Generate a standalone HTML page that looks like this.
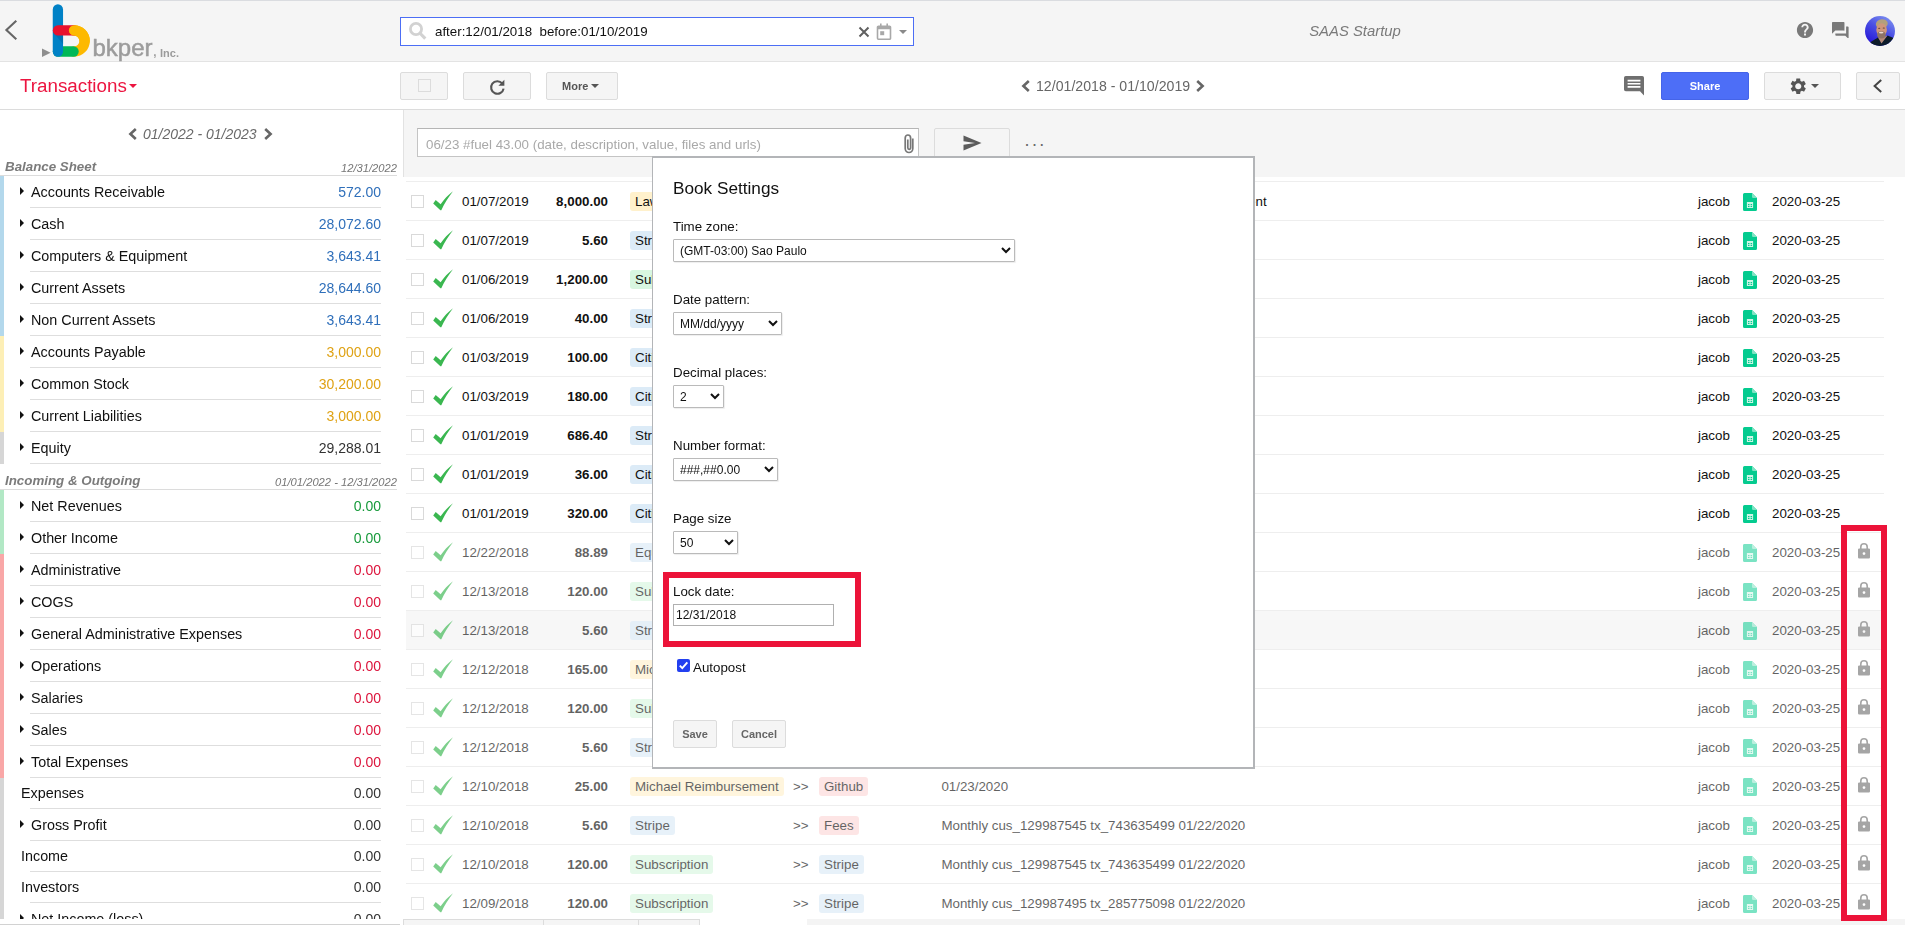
<!DOCTYPE html>
<html lang="en">
<head>
<meta charset="utf-8">
<title>bkper - SAAS Startup</title>
<style>
*{box-sizing:border-box}
html,body{margin:0;padding:0}
body{width:1905px;height:925px;overflow:hidden;position:relative;background:#fff;color:#111;
 font-family:"Liberation Sans",Arial,sans-serif;font-size:13.33px}
.abs{position:absolute}
.gs{will-change:transform}
/* ---------- top header ---------- */
#top{position:absolute;left:0;top:0;width:1905px;height:62px;background:#f5f5f5;box-shadow:inset 0 1px 0 #dadce0,inset 0 -1px 0 #e3e3e3}
#bar{position:absolute;left:0;top:62px;width:1905px;height:48px;background:#fff;border-bottom:1px solid #dcdcdc}
#search{position:absolute;left:400px;top:17px;width:514px;height:29px;background:#fff;border:1px solid #4c6ef5}
#search .q{position:absolute;left:34px;top:0;line-height:27px;font-size:13.33px;color:#111;white-space:pre}
#book{position:absolute;left:1250px;width:210px;top:21px;text-align:center;font-style:italic;font-size:14.850px;color:#7a7a7a;line-height:20px}
#avatar{position:absolute;left:1865px;top:16px}
#logo-text{position:absolute;left:92.500px;top:33px;-webkit-text-stroke:0.500px #9c9c9c;font-size:24px;line-height:30px;color:#9c9c9c}
#logo-inc{position:absolute;left:160px;top:45.500px;font-size:11px;line-height:14px;font-weight:bold;color:#9b9b9b}
#title{position:absolute;left:20px;top:74px;font-size:18.800px;line-height:24px;color:#ec1540}
.btn{will-change:transform;position:absolute;top:72px;height:28px;background:#f5f5f5;border:1px solid #dcdcdc;border-radius:2px;font-size:11px;font-weight:bold;color:#555;line-height:26px;text-align:center}
.caret{display:inline-block;width:0;height:0;border-left:4px solid transparent;border-right:4px solid transparent;border-top:4px solid #555;vertical-align:middle}
#range{position:absolute;left:1036px;top:76px;font-size:14.150px;line-height:20px;color:#666;white-space:pre}
/* ---------- sidebar ---------- */
#side{position:absolute;left:0;top:110px;width:400px;height:809px;overflow:hidden;background:#fff}
#sidebot{position:absolute;left:0;top:924px;width:400px;height:1px;background:#d2d2d2}
#speriod{position:absolute;left:143px;top:15px;font-size:14px;line-height:18px;font-style:italic;color:#6a6a6a;white-space:pre}
.gh{position:absolute;left:0;width:397px;height:18px;border-bottom:1px solid #dcdcdc}
.gh b{position:absolute;left:5px;bottom:0;font-size:13.330px;line-height:16px;font-style:italic;color:#7b7b7b}
.gh em{position:absolute;right:0;bottom:0;font-size:11.2px;line-height:14px;color:#777}
.grp{position:absolute;left:0;width:400px}
.ar{position:relative;width:400px;font-size:14px}
.ar.t{height:32px;line-height:31px}
.ar.n{height:31px;line-height:30px}
.ar:after{content:"";position:absolute;left:30px;width:351px;bottom:0;height:1px;background:#dedede}
.ar .nm{position:absolute;left:31px;top:1px;white-space:nowrap;color:#111;font-size:14.350px}
.ar.n .nm{left:21px;top:0}.ar.n .vl{top:0}
.ar .vl{position:absolute;right:19px;top:1px}
.tri{position:absolute;left:20px;top:11.300px;width:0;height:0;border-top:4.700px solid transparent;border-bottom:4.700px solid transparent;border-left:4.600px solid #111}
.vb{color:#2f6fba}.vy{color:#dfa214}.vk{color:#333}.vg{color:#179a3b}.vr{color:#dc143c}
.bar4{position:absolute;left:0;width:4px}
/* ---------- main ---------- */
#compose{position:absolute;left:403px;top:110px;width:1502px;height:67px;background:#f5f5f5;border-left:1px solid #e2e2e2}
#cin{position:absolute;left:417px;top:128px;width:502px;height:29px;background:#fff;border:1px solid #c4c4c4;border-top-color:#b5b5b5}
#cin span{position:absolute;left:8px;top:1px;line-height:30px;font-size:13.33px;color:#a9a9a9;white-space:nowrap}
#send{position:absolute;left:934px;top:128px;width:76px;height:30px;background:#f5f5f5;border:1px solid #dcdcdc;border-radius:2px}
#dots{position:absolute;left:1024.600px;top:130px;font-size:18px;line-height:20px;letter-spacing:2.350px;color:#6a6a6a}
#tbl{position:absolute;left:406px;top:181px;width:1478px;border-top:1px solid #eeeeee}
.tr{position:relative;height:39px;border-bottom:1px solid #eeeeee;line-height:40px;white-space:nowrap}
.tr.hov{background:#f7f7f7}
.fd{position:absolute;left:0;top:0;width:1478px;height:38px}
.lkd .fd{opacity:.66}.lkd .sh{opacity:.8}
.cb{position:absolute;left:5px;top:13px;width:13px;height:13px;border:1px solid #d9d9d9;background:#fff}
.ck{position:absolute;left:27px;top:9px}
.dt{position:absolute;left:56px;top:0}
.am{position:absolute;left:102px;width:100px;text-align:right;font-weight:bold;top:0}
.ch{position:absolute;top:10px;height:19px;line-height:20px;padding:0 5px;border-radius:3px}
.ch.y{background:#fff1cc}.ch.b{background:#dcebf7}.ch.g{background:#d8f6e0}.ch.r{background:#fdd9d9}
.gt{position:absolute;left:387px;top:0}
.ds{position:absolute;left:535.4px;top:0}
.us{position:absolute;left:1292px;top:0}
.sh{position:absolute;left:1337px;top:11px}
.cr{position:absolute;left:1366px;top:0}
.lk{position:absolute;left:1452px;top:10px}
#foot{position:absolute;left:403px;top:919px;width:1502px;height:6px;background:#fff}
#foot i{position:absolute;top:0;height:8px;background:#f5f5f5;border:1px solid #dcdcdc}
#footg{position:absolute;left:807px;top:919px;width:1098px;height:6px;background:#f4f4f4}
/* ---------- dialog ---------- */
#dlg{position:absolute;left:652px;top:156px;width:603px;height:613px;background:#fff;border:2px solid #b3b5b8;border-left-width:1px;font-size:13px;color:#111}
#dlg h3{position:absolute;left:20px;top:19px;margin:0;font-size:17.2px;font-weight:normal;line-height:22px}
#dlg label{position:absolute;left:20px;line-height:16px;font-size:13.330px}
#dlg select{position:absolute;left:20px;height:23px;font-family:"Liberation Sans",Arial,sans-serif;font-size:12px;color:#111;background:#fff;border:1px solid #bababa;border-radius:1px;padding:0 0 0 2px;margin:0;box-shadow:1px 1px 1px rgba(0,0,0,.07)}
#lockin{position:absolute;left:20px;top:446px;width:161px;height:22px;border:1px solid #b0b0b0;background:#fff;font-size:12px;line-height:20px;padding-left:2px}
#auto{position:absolute;left:24px;top:501px;width:13px;height:13px;border-radius:2px;background:#2340f0}
.dbtn{position:absolute;top:562px;height:28px;background:#f5f5f5;border:1px solid #dcdcdc;border-radius:2px;font-size:11px;font-weight:bold;color:#666;line-height:26px;text-align:center}
.red{position:absolute;border:6px solid #ec1339}
</style>
</head>
<body>
<!-- ================= HEADER ================= -->
<div id="top" class="gs">
  <svg class="abs" style="left:4px;top:19px" width="15" height="22" viewBox="0 0 15 22"><path d="M12.300 1.800L2.400 11L12.300 20.200" fill="none" stroke="#666" stroke-width="2.100"/></svg>
  <svg class="abs" style="left:40px;top:3px" width="52" height="58" viewBox="40 3 52 58">
    <path d="M42 48.500L50.600 52.800L42 57.100z" fill="#8e8e8e"/>
    <path d="M74.050 30.400A10.550 10.550 0 0 1 74.050 51.500" stroke="#fdb900" stroke-width="10.400" stroke-linecap="round" fill="none"/>
    <path d="M58 51.500H73.500" stroke="#00b857" stroke-width="10.400" stroke-linecap="round" fill="none"/>
    <path d="M57.900 9.400V51.500" stroke="#0081c6" stroke-width="10.300" stroke-linecap="round" fill="none"/>
    <path d="M52.800 32L63.050 44V35.500L58 33z" fill="#006aa8" opacity=".6"/>
    <path d="M58 30.400H74" stroke="#e8112d" stroke-width="10.400" stroke-linecap="round" fill="none"/>
    <path d="M74.050 30.400A10.550 10.550 0 0 1 84.600 40.950" stroke="#fdb900" stroke-width="10.400" stroke-linecap="round" fill="none"/>
  </svg>
  <div id="logo-text">bkper<span style="font-size:17px;-webkit-text-stroke:0 #9c9c9c">,</span></div>
  <div id="logo-inc">Inc.</div>

  <div id="search">
    <svg class="abs" style="left:7px;top:3px" width="21" height="22" viewBox="0 0 21 22"><circle cx="8" cy="8" r="5.600" fill="none" stroke="#d2d2d2" stroke-width="2.800"/><path d="M11.800 12L17.300 17.600" stroke="#d2d2d2" stroke-width="3.200"/></svg>
    <span class="q">after:12/01/2018  before:01/10/2019</span>
    <svg class="abs" style="left:456.500px;top:7.500px" width="12" height="12" viewBox="0 0 12 12"><path d="M1.500 1.500L10.500 10.500M10.500 1.500L1.500 10.500" stroke="#606060" stroke-width="2"/></svg>
    <svg class="abs" style="left:475px;top:5px" width="16" height="18" viewBox="0 0 16 18"><path d="M2.500 3.200h11a1 1 0 0 1 1 1v11a1 1 0 0 1-1 1h-11a1 1 0 0 1-1-1v-11a1 1 0 0 1 1-1z" fill="none" stroke="#a8a8a8" stroke-width="1.600"/><path d="M1.500 3.200h13v3h-13z M4 0.500h1.600v3H4z M10.400 0.500H12v3h-1.600z" fill="#a8a8a8"/><rect x="4.200" y="8.200" width="4" height="4" fill="#a8a8a8"/></svg>
    <i class="caret abs" style="left:498px;top:12px;border-top-color:#8a8a8a"></i>
  </div>

  <div id="book">SAAS Startup</div>

  <svg class="abs" style="left:1796px;top:21px" width="18" height="18" viewBox="0 0 24 24"><path fill="#797979" d="M12 1.200C6 1.200 1.200 6 1.200 12S6 22.800 12 22.800 22.800 18 22.800 12 18 1.200 12 1.200zm1.300 18.100h-2.600v-2.600h2.600v2.600zm2.500-8.300l-1 1c-.9.800-1.400 1.500-1.400 3.200h-2.600v-.6c0-1.200.5-2.300 1.300-3.100l1.500-1.500c.4-.4.700-1 .7-1.700 0-1.300-1.100-2.300-2.300-2.300S9.600 7 9.600 8.300H7.100C7.100 5.600 9.300 3.500 12 3.500s4.900 2.100 4.900 4.800c0 1.100-.4 2-1.100 2.700z"/></svg>
  <svg class="abs" style="left:1832px;top:21.500px" width="17.300" height="16.300" viewBox="0 0 24 24" preserveAspectRatio="none"><path fill="#797979" d="M22.800 7.200h-2.400V18H4.800v2.400c0 .7.500 1.200 1.200 1.200h13.200l4.800 4.800V8.400c0-.7-.5-1.200-1.200-1.200zM18 14.400V1.600c0-.7-.5-1.200-1.200-1.200H1.200C.5.400 0 .9 0 1.600v16.800l4.800-4.800h12c.7.800 1.200.3 1.200-.400z" transform="translate(0,-0.400) scale(.96)"/></svg>
  <svg id="avatar" width="30" height="30" viewBox="0 0 30 30"><defs><clipPath id="avc"><circle cx="15" cy="15" r="15"/></clipPath><filter id="avb" x="-20%" y="-20%" width="140%" height="140%"><feGaussianBlur stdDeviation="0.700"/></filter><linearGradient id="avg" x1=".8" y1="0" x2=".2" y2="1"><stop offset="0" stop-color="#7f92f0"/><stop offset=".45" stop-color="#4a4fe4"/><stop offset="1" stop-color="#2210d6"/></linearGradient></defs><g clip-path="url(#avc)"><rect width="30" height="30" fill="url(#avg)"/><g filter="url(#avb)"><path d="M4 27L13 21.500L17 24L22.500 19.500L28.500 22V31H4z" fill="#0f1a2a"/><path d="M13 21.500L16.500 27.500L22.500 19.500L19 21z" fill="#b58a78"/><ellipse cx="16.800" cy="7.800" rx="6" ry="4.600" fill="#b3a07c" transform="rotate(-8 16.800 7.800)"/><ellipse cx="16.600" cy="13.800" rx="5.300" ry="6.600" fill="#cf967c"/><ellipse cx="16.400" cy="18.800" rx="4.300" ry="3.600" fill="#8e7366"/><ellipse cx="16.200" cy="16.600" rx="2.300" ry="0.900" fill="#e9d9d2"/><ellipse cx="14.200" cy="12.300" rx="1.100" ry=".55" fill="#5a3a30"/><ellipse cx="18.800" cy="12" rx="1.100" ry=".55" fill="#5a3a30"/></g></g></svg>
</div>

<!-- ================= TOOLBAR ================= -->
<div id="bar"></div>
<div id="title" class="gs">Transactions</div>
<i class="caret abs" style="left:129px;top:84px;border-top-color:#ec1540"></i>

<div class="btn" style="left:400px;width:48px"><span class="abs" style="left:17px;top:6px;width:13px;height:13px;border:1px solid #dcdcdc"></span></div>
<div class="btn" style="left:463px;width:68px">
  <svg class="abs" style="left:25px;top:6px" width="17" height="17" viewBox="0 0 17 17"><path d="M13.200 4.400A6.300 6.300 0 1 0 14.600 9.600" fill="none" stroke="#555" stroke-width="2.100"/><path d="M15.400 0.800V6.800H9.400z" fill="#555"/></svg>
</div>
<div class="btn" style="left:546px;width:72px;text-align:left;padding-left:15px">More<i class="caret" style="margin-left:3px;margin-top:-3px"></i></div>

<svg class="abs" style="left:1021px;top:80px" width="10" height="12" viewBox="0 0 10 12"><path d="M7.800 1L2.400 6L7.800 11" fill="none" stroke="#666" stroke-width="2.600"/></svg>
<div id="range" class="gs">12/01/2018 - 01/10/2019</div>
<svg class="abs" style="left:1195px;top:80px" width="10" height="12" viewBox="0 0 10 12"><path d="M2.200 1L7.600 6L2.200 11" fill="none" stroke="#666" stroke-width="2.600"/></svg>

<svg class="abs" style="left:1624px;top:76px" width="21" height="20" viewBox="0 0 21 20"><path d="M1.800 0h16.400A1.800 1.800 0 0 1 20 1.800V19.500L16 15.200H1.800A1.800 1.800 0 0 1 0 13.400V1.800A1.800 1.800 0 0 1 1.800 0z" fill="#6f6f6f"/><path d="M3.600 3.700h12.800v1.700H3.600z M3.600 6.900h12.800v1.700H3.600z M3.600 10.100h12.800v1.700H3.600z" fill="#fff"/></svg>
<div class="btn" style="left:1661px;width:88px;background:#4d6ef7;border-color:#4564e8;color:#fff">Share</div>
<div class="btn" style="left:1764px;width:77px">
  <svg class="abs" style="left:24px;top:4px" width="18.500" height="18.500" viewBox="0 0 24 24"><path fill="#555" d="M19.430 12.980c.040-.320.070-.640.070-.980s-.030-.660-.070-.980l2.110-1.650c.190-.150.240-.420.120-.640l-2-3.460c-.120-.220-.390-.300-.610-.220l-2.490 1c-.520-.400-1.080-.730-1.690-.980l-.380-2.650C14.460 2.180 14.250 2 14 2h-4c-.250 0-.460.180-.490.420l-.380 2.650c-.610.250-1.170.590-1.690.980l-2.490-1c-.230-.090-.490 0-.610.220l-2 3.460c-.130.220-.070.490.120.640l2.110 1.650c-.040.320-.070.650-.070.980s.030.660.070.980l-2.110 1.650c-.190.150-.240.420-.120.640l2 3.460c.120.220.390.300.610.220l2.490-1c.520.400 1.080.730 1.690.980l.380 2.650c.030.240.240.420.490.420h4c.250 0 .460-.180.490-.420l.380-2.650c.610-.250 1.170-.590 1.690-.980l2.490 1c.230.090.490 0 .610-.220l2-3.460c.120-.220.070-.490-.120-.640l-2.110-1.650zM12 16c-2.210 0-4-1.790-4-4s1.790-4 4-4 4 1.790 4 4-1.790 4-4 4z"/></svg>
  <i class="caret abs" style="left:46px;top:11px"></i>
</div>
<div class="btn" style="left:1856px;width:44px">
  <svg class="abs" style="left:15px;top:6px" width="11" height="14" viewBox="0 0 11 14"><path d="M9.200 1L2.600 7L9.200 13" fill="none" stroke="#444" stroke-width="2"/></svg>
</div>

<!-- ================= SIDEBAR ================= -->
<div id="side" class="gs">
  <svg class="abs" style="left:128px;top:18px" width="10" height="12" viewBox="0 0 10 12"><path d="M7.800 1L2.400 6L7.800 11" fill="none" stroke="#666" stroke-width="2.600"/></svg>
  <div id="speriod">01/2022 - 01/2023</div>
  <svg class="abs" style="left:263px;top:18px" width="10" height="12" viewBox="0 0 10 12"><path d="M2.200 1L7.600 6L2.200 11" fill="none" stroke="#666" stroke-width="2.600"/></svg>

  <div class="gh" style="top:48px"><b>Balance Sheet</b><em>12/31/2022</em></div>
  <div class="bar4" style="top:66px;height:160px;background:#b3d8ec"></div>
  <div class="bar4" style="top:226px;height:96px;background:#fdefb6"></div>
  <div class="bar4" style="top:322px;height:32px;background:#d6d6d6"></div>
  <div class="grp" style="top:66px">
<div class="ar t"><i class="tri"></i><span class="nm">Accounts Receivable</span><span class="vl vb">572.00</span></div>
<div class="ar t"><i class="tri"></i><span class="nm">Cash</span><span class="vl vb">28,072.60</span></div>
<div class="ar t"><i class="tri"></i><span class="nm">Computers &amp; Equipment</span><span class="vl vb">3,643.41</span></div>
<div class="ar t"><i class="tri"></i><span class="nm">Current Assets</span><span class="vl vb">28,644.60</span></div>
<div class="ar t"><i class="tri"></i><span class="nm">Non Current Assets</span><span class="vl vb">3,643.41</span></div>
<div class="ar t"><i class="tri"></i><span class="nm">Accounts Payable</span><span class="vl vy">3,000.00</span></div>
<div class="ar t"><i class="tri"></i><span class="nm">Common Stock</span><span class="vl vy">30,200.00</span></div>
<div class="ar t"><i class="tri"></i><span class="nm">Current Liabilities</span><span class="vl vy">3,000.00</span></div>
<div class="ar t"><i class="tri"></i><span class="nm">Equity</span><span class="vl vk">29,288.01</span></div>
  </div>

  <div class="gh" style="top:362px"><b>Incoming &amp; Outgoing</b><em>01/01/2022 - 12/31/2022</em></div>
  <div class="bar4" style="top:380px;height:64px;background:#b2e8c5"></div>
  <div class="bar4" style="top:444px;height:224px;background:#f9a7a7"></div>
  <div class="bar4" style="top:668px;height:160px;background:#d6d6d6"></div>
  <div class="grp" style="top:380px">
<div class="ar t"><i class="tri"></i><span class="nm">Net Revenues</span><span class="vl vg">0.00</span></div>
<div class="ar t"><i class="tri"></i><span class="nm">Other Income</span><span class="vl vg">0.00</span></div>
<div class="ar t"><i class="tri"></i><span class="nm">Administrative</span><span class="vl vr">0.00</span></div>
<div class="ar t"><i class="tri"></i><span class="nm">COGS</span><span class="vl vr">0.00</span></div>
<div class="ar t"><i class="tri"></i><span class="nm">General Administrative Expenses</span><span class="vl vr">0.00</span></div>
<div class="ar t"><i class="tri"></i><span class="nm">Operations</span><span class="vl vr">0.00</span></div>
<div class="ar t"><i class="tri"></i><span class="nm">Salaries</span><span class="vl vr">0.00</span></div>
<div class="ar t"><i class="tri"></i><span class="nm">Sales</span><span class="vl vr">0.00</span></div>
<div class="ar t"><i class="tri"></i><span class="nm">Total Expenses</span><span class="vl vr">0.00</span></div>
<div class="ar n"><span class="nm">Expenses</span><span class="vl vk">0.00</span></div>
<div class="ar t"><i class="tri"></i><span class="nm">Gross Profit</span><span class="vl vk">0.00</span></div>
<div class="ar n"><span class="nm">Income</span><span class="vl vk">0.00</span></div>
<div class="ar n"><span class="nm">Investors</span><span class="vl vk">0.00</span></div>
<div class="ar t"><i class="tri"></i><span class="nm">Net Income (loss)</span><span class="vl vk">0.00</span></div>
  </div>
</div>
<div id="sidebot"></div>

<!-- ================= MAIN ================= -->
<div id="compose"></div>
<div id="cin" class="gs"><span>06/23 #fuel 43.00 (date, description, value, files and urls)</span>
  <svg class="abs" style="left:485px;top:4px" width="12" height="22" viewBox="0 0 12 22"><path d="M9.800 5.500V15.500A3.800 4 0 0 1 2.200 15.500V5A2.700 3 0 0 1 7.600 5V14.800A1.400 1.500 0 0 1 4.800 14.800V6.500" fill="none" stroke="#777" stroke-width="1.700"/></svg>
</div>
<div id="send"><svg class="abs" style="left:28px;top:5.500px" width="19" height="16" viewBox="0 0 19 16"><path d="M0.500 0.500L18.500 8L0.500 15.500L0.500 9.700L12 8L0.500 6.300z" fill="#5c5c5c"/></svg></div>
<div id="dots">...</div>

<div id="tbl">
<div class="tr"><div class="fd"><span class="cb"></span><svg class="ck" width="21" height="20" viewBox="0 0 21 20"><path d="M0.200 12.400L2.700 9.100L7.600 13.300C11 8.500 15 3.800 20 0.200C15.500 6 11.600 12 8.300 19.200L7.400 19.200z" fill="#3ab750"/></svg><span class="dt">01/07/2019</span><span class="am">8,000.00</span><span class="ch y" style="left:224px">Lawyer</span><span class="gt">&gt;&gt;</span><span class="ch r" style="left:413px">Legal Services</span><span class="ds">Legal services payable for the shareholders agreement</span><span class="us">jacob</span><svg class="sh" width="14" height="18" viewBox="0 0 14 18"><path d="M1.500 0H9l5 5v11.500a1.500 1.500 0 0 1-1.500 1.500h-11A1.500 1.500 0 0 1 0 16.500V1.500A1.500 1.500 0 0 1 1.500 0z" fill="#04cb8f"/><path d="M9 0l5 5H10.200A1.200 1.200 0 0 1 9 3.800z" fill="#7fe3c3"/><path d="M3.900 8.900h6.200v6.100H3.900z M5 11.100v1.200h1.500v-1.200z M7.600 11.100v1.200h1.500v-1.200z M5 13v1.100h1.500V13z M7.600 13v1.100h1.500V13z" fill="#cff5e7" fill-rule="evenodd"/></svg><span class="cr">2020-03-25</span></div></div>
<div class="tr"><div class="fd"><span class="cb"></span><svg class="ck" width="21" height="20" viewBox="0 0 21 20"><path d="M0.200 12.400L2.700 9.100L7.600 13.300C11 8.500 15 3.800 20 0.200C15.500 6 11.600 12 8.300 19.200L7.400 19.200z" fill="#3ab750"/></svg><span class="dt">01/07/2019</span><span class="am">5.60</span><span class="ch b" style="left:224px">Stripe</span><span class="gt">&gt;&gt;</span><span class="ch r" style="left:413px">Fees</span><span class="ds">Monthly cus_129987888 tx_843635111 02/22/2020</span><span class="us">jacob</span><svg class="sh" width="14" height="18" viewBox="0 0 14 18"><path d="M1.500 0H9l5 5v11.500a1.500 1.500 0 0 1-1.500 1.500h-11A1.500 1.500 0 0 1 0 16.500V1.500A1.500 1.500 0 0 1 1.500 0z" fill="#04cb8f"/><path d="M9 0l5 5H10.200A1.200 1.200 0 0 1 9 3.800z" fill="#7fe3c3"/><path d="M3.900 8.900h6.200v6.100H3.900z M5 11.100v1.200h1.500v-1.200z M7.600 11.100v1.200h1.500v-1.200z M5 13v1.100h1.500V13z M7.600 13v1.100h1.500V13z" fill="#cff5e7" fill-rule="evenodd"/></svg><span class="cr">2020-03-25</span></div></div>
<div class="tr"><div class="fd"><span class="cb"></span><svg class="ck" width="21" height="20" viewBox="0 0 21 20"><path d="M0.200 12.400L2.700 9.100L7.600 13.300C11 8.500 15 3.800 20 0.200C15.500 6 11.600 12 8.300 19.200L7.400 19.200z" fill="#3ab750"/></svg><span class="dt">01/06/2019</span><span class="am">1,200.00</span><span class="ch g" style="left:224px">Subscription</span><span class="gt">&gt;&gt;</span><span class="ch b" style="left:413px">Stripe</span><span class="ds">Yearly cus_129987888 tx_843635111 02/22/2020</span><span class="us">jacob</span><svg class="sh" width="14" height="18" viewBox="0 0 14 18"><path d="M1.500 0H9l5 5v11.500a1.500 1.500 0 0 1-1.500 1.500h-11A1.500 1.500 0 0 1 0 16.500V1.500A1.500 1.500 0 0 1 1.500 0z" fill="#04cb8f"/><path d="M9 0l5 5H10.200A1.200 1.200 0 0 1 9 3.800z" fill="#7fe3c3"/><path d="M3.900 8.900h6.200v6.100H3.900z M5 11.100v1.200h1.500v-1.200z M7.600 11.100v1.200h1.500v-1.200z M5 13v1.100h1.500V13z M7.600 13v1.100h1.500V13z" fill="#cff5e7" fill-rule="evenodd"/></svg><span class="cr">2020-03-25</span></div></div>
<div class="tr"><div class="fd"><span class="cb"></span><svg class="ck" width="21" height="20" viewBox="0 0 21 20"><path d="M0.200 12.400L2.700 9.100L7.600 13.300C11 8.500 15 3.800 20 0.200C15.500 6 11.600 12 8.300 19.200L7.400 19.200z" fill="#3ab750"/></svg><span class="dt">01/06/2019</span><span class="am">40.00</span><span class="ch b" style="left:224px">Stripe</span><span class="gt">&gt;&gt;</span><span class="ch r" style="left:413px">Fees</span><span class="ds">Yearly cus_129987777 tx_643635222 02/21/2020</span><span class="us">jacob</span><svg class="sh" width="14" height="18" viewBox="0 0 14 18"><path d="M1.500 0H9l5 5v11.500a1.500 1.500 0 0 1-1.500 1.500h-11A1.500 1.500 0 0 1 0 16.500V1.500A1.500 1.500 0 0 1 1.500 0z" fill="#04cb8f"/><path d="M9 0l5 5H10.200A1.200 1.200 0 0 1 9 3.800z" fill="#7fe3c3"/><path d="M3.900 8.900h6.200v6.100H3.900z M5 11.100v1.200h1.500v-1.200z M7.600 11.100v1.200h1.500v-1.200z M5 13v1.100h1.500V13z M7.600 13v1.100h1.500V13z" fill="#cff5e7" fill-rule="evenodd"/></svg><span class="cr">2020-03-25</span></div></div>
<div class="tr"><div class="fd"><span class="cb"></span><svg class="ck" width="21" height="20" viewBox="0 0 21 20"><path d="M0.200 12.400L2.700 9.100L7.600 13.300C11 8.500 15 3.800 20 0.200C15.500 6 11.600 12 8.300 19.200L7.400 19.200z" fill="#3ab750"/></svg><span class="dt">01/03/2019</span><span class="am">100.00</span><span class="ch b" style="left:224px">Citibank</span><span class="gt">&gt;&gt;</span><span class="ch r" style="left:413px">Internet</span><span class="ds">01/25/2020</span><span class="us">jacob</span><svg class="sh" width="14" height="18" viewBox="0 0 14 18"><path d="M1.500 0H9l5 5v11.500a1.500 1.500 0 0 1-1.500 1.500h-11A1.500 1.500 0 0 1 0 16.500V1.500A1.500 1.500 0 0 1 1.500 0z" fill="#04cb8f"/><path d="M9 0l5 5H10.200A1.200 1.200 0 0 1 9 3.800z" fill="#7fe3c3"/><path d="M3.900 8.900h6.200v6.100H3.900z M5 11.100v1.200h1.500v-1.200z M7.600 11.100v1.200h1.500v-1.200z M5 13v1.100h1.500V13z M7.600 13v1.100h1.500V13z" fill="#cff5e7" fill-rule="evenodd"/></svg><span class="cr">2020-03-25</span></div></div>
<div class="tr"><div class="fd"><span class="cb"></span><svg class="ck" width="21" height="20" viewBox="0 0 21 20"><path d="M0.200 12.400L2.700 9.100L7.600 13.300C11 8.500 15 3.800 20 0.200C15.500 6 11.600 12 8.300 19.200L7.400 19.200z" fill="#3ab750"/></svg><span class="dt">01/03/2019</span><span class="am">180.00</span><span class="ch b" style="left:224px">Citibank</span><span class="gt">&gt;&gt;</span><span class="ch r" style="left:413px">Rent</span><span class="ds">01/25/2020</span><span class="us">jacob</span><svg class="sh" width="14" height="18" viewBox="0 0 14 18"><path d="M1.500 0H9l5 5v11.500a1.500 1.500 0 0 1-1.500 1.500h-11A1.500 1.500 0 0 1 0 16.500V1.500A1.500 1.500 0 0 1 1.500 0z" fill="#04cb8f"/><path d="M9 0l5 5H10.200A1.200 1.200 0 0 1 9 3.800z" fill="#7fe3c3"/><path d="M3.900 8.900h6.200v6.100H3.900z M5 11.100v1.200h1.500v-1.200z M7.600 11.100v1.200h1.500v-1.200z M5 13v1.100h1.500V13z M7.600 13v1.100h1.500V13z" fill="#cff5e7" fill-rule="evenodd"/></svg><span class="cr">2020-03-25</span></div></div>
<div class="tr"><div class="fd"><span class="cb"></span><svg class="ck" width="21" height="20" viewBox="0 0 21 20"><path d="M0.200 12.400L2.700 9.100L7.600 13.300C11 8.500 15 3.800 20 0.200C15.500 6 11.600 12 8.300 19.200L7.400 19.200z" fill="#3ab750"/></svg><span class="dt">01/01/2019</span><span class="am">686.40</span><span class="ch b" style="left:224px">Stripe</span><span class="gt">&gt;&gt;</span><span class="ch b" style="left:413px">Citibank</span><span class="ds">Stripe payout 01/24/2020</span><span class="us">jacob</span><svg class="sh" width="14" height="18" viewBox="0 0 14 18"><path d="M1.500 0H9l5 5v11.500a1.500 1.500 0 0 1-1.500 1.500h-11A1.500 1.500 0 0 1 0 16.500V1.500A1.500 1.500 0 0 1 1.500 0z" fill="#04cb8f"/><path d="M9 0l5 5H10.200A1.200 1.200 0 0 1 9 3.800z" fill="#7fe3c3"/><path d="M3.900 8.900h6.200v6.100H3.900z M5 11.100v1.200h1.500v-1.200z M7.600 11.100v1.200h1.500v-1.200z M5 13v1.100h1.500V13z M7.600 13v1.100h1.500V13z" fill="#cff5e7" fill-rule="evenodd"/></svg><span class="cr">2020-03-25</span></div></div>
<div class="tr"><div class="fd"><span class="cb"></span><svg class="ck" width="21" height="20" viewBox="0 0 21 20"><path d="M0.200 12.400L2.700 9.100L7.600 13.300C11 8.500 15 3.800 20 0.200C15.500 6 11.600 12 8.300 19.200L7.400 19.200z" fill="#3ab750"/></svg><span class="dt">01/01/2019</span><span class="am">36.00</span><span class="ch b" style="left:224px">Citibank</span><span class="gt">&gt;&gt;</span><span class="ch r" style="left:413px">Github</span><span class="ds">01/24/2020</span><span class="us">jacob</span><svg class="sh" width="14" height="18" viewBox="0 0 14 18"><path d="M1.500 0H9l5 5v11.500a1.500 1.500 0 0 1-1.500 1.500h-11A1.500 1.500 0 0 1 0 16.500V1.500A1.500 1.500 0 0 1 1.500 0z" fill="#04cb8f"/><path d="M9 0l5 5H10.200A1.200 1.200 0 0 1 9 3.800z" fill="#7fe3c3"/><path d="M3.900 8.900h6.200v6.100H3.900z M5 11.100v1.200h1.500v-1.200z M7.600 11.100v1.200h1.500v-1.200z M5 13v1.100h1.500V13z M7.600 13v1.100h1.500V13z" fill="#cff5e7" fill-rule="evenodd"/></svg><span class="cr">2020-03-25</span></div></div>
<div class="tr"><div class="fd"><span class="cb"></span><svg class="ck" width="21" height="20" viewBox="0 0 21 20"><path d="M0.200 12.400L2.700 9.100L7.600 13.300C11 8.500 15 3.800 20 0.200C15.500 6 11.600 12 8.300 19.200L7.400 19.200z" fill="#3ab750"/></svg><span class="dt">01/01/2019</span><span class="am">320.00</span><span class="ch b" style="left:224px">Citibank</span><span class="gt">&gt;&gt;</span><span class="ch r" style="left:413px">Salaries</span><span class="ds">01/24/2020</span><span class="us">jacob</span><svg class="sh" width="14" height="18" viewBox="0 0 14 18"><path d="M1.500 0H9l5 5v11.500a1.500 1.500 0 0 1-1.500 1.500h-11A1.500 1.500 0 0 1 0 16.500V1.500A1.500 1.500 0 0 1 1.500 0z" fill="#04cb8f"/><path d="M9 0l5 5H10.200A1.200 1.200 0 0 1 9 3.800z" fill="#7fe3c3"/><path d="M3.900 8.900h6.200v6.100H3.900z M5 11.100v1.200h1.500v-1.200z M7.600 11.100v1.200h1.500v-1.200z M5 13v1.100h1.500V13z M7.600 13v1.100h1.500V13z" fill="#cff5e7" fill-rule="evenodd"/></svg><span class="cr">2020-03-25</span></div></div>
<div class="tr lkd"><div class="fd"><span class="cb"></span><svg class="ck" width="21" height="20" viewBox="0 0 21 20"><path d="M0.200 12.400L2.700 9.100L7.600 13.300C11 8.500 15 3.800 20 0.200C15.500 6 11.600 12 8.300 19.200L7.400 19.200z" fill="#3ab750"/></svg><span class="dt">12/22/2018</span><span class="am">88.89</span><span class="ch b" style="left:224px">Equipment</span><span class="gt">&gt;&gt;</span><span class="ch r" style="left:413px">Depreciation</span><span class="ds">Monthly depreciation 01/23/2020</span><span class="us">jacob</span><svg class="sh" width="14" height="18" viewBox="0 0 14 18"><path d="M1.500 0H9l5 5v11.500a1.500 1.500 0 0 1-1.500 1.500h-11A1.500 1.500 0 0 1 0 16.500V1.500A1.500 1.500 0 0 1 1.500 0z" fill="#04cb8f"/><path d="M9 0l5 5H10.200A1.200 1.200 0 0 1 9 3.800z" fill="#7fe3c3"/><path d="M3.900 8.900h6.200v6.100H3.900z M5 11.100v1.200h1.500v-1.200z M7.600 11.100v1.200h1.500v-1.200z M5 13v1.100h1.500V13z M7.600 13v1.100h1.500V13z" fill="#cff5e7" fill-rule="evenodd"/></svg><span class="cr">2020-03-25</span></div><svg class="lk" width="12" height="16" viewBox="0 0 12 16"><path d="M2 5.400V4a4 4 0 0 1 8 0V5.400h0.800A1.200 1.200 0 0 1 12 6.600v7.700a1.200 1.200 0 0 1-1.200 1.200H1.200A1.200 1.200 0 0 1 0 14.300V6.600A1.200 1.200 0 0 1 1.200 5.400z M3.600 5.400h4.800V4a2.400 2.400 0 0 0-4.800 0z M6 9.200a1.400 1.400 0 1 0 0 2.800a1.400 1.400 0 0 0 0-2.800z" fill="#a5a5a5" fill-rule="evenodd"/></svg></div>
<div class="tr lkd"><div class="fd"><span class="cb"></span><svg class="ck" width="21" height="20" viewBox="0 0 21 20"><path d="M0.200 12.400L2.700 9.100L7.600 13.300C11 8.500 15 3.800 20 0.200C15.500 6 11.600 12 8.300 19.200L7.400 19.200z" fill="#3ab750"/></svg><span class="dt">12/13/2018</span><span class="am">120.00</span><span class="ch g" style="left:224px">Subscription</span><span class="gt">&gt;&gt;</span><span class="ch b" style="left:413px">Stripe</span><span class="ds">Monthly cus_129987601 tx_543635333 01/23/2020</span><span class="us">jacob</span><svg class="sh" width="14" height="18" viewBox="0 0 14 18"><path d="M1.500 0H9l5 5v11.500a1.500 1.500 0 0 1-1.500 1.500h-11A1.500 1.500 0 0 1 0 16.500V1.500A1.500 1.500 0 0 1 1.500 0z" fill="#04cb8f"/><path d="M9 0l5 5H10.200A1.200 1.200 0 0 1 9 3.800z" fill="#7fe3c3"/><path d="M3.900 8.900h6.200v6.100H3.900z M5 11.100v1.200h1.500v-1.200z M7.600 11.100v1.200h1.500v-1.200z M5 13v1.100h1.500V13z M7.600 13v1.100h1.500V13z" fill="#cff5e7" fill-rule="evenodd"/></svg><span class="cr">2020-03-25</span></div><svg class="lk" width="12" height="16" viewBox="0 0 12 16"><path d="M2 5.400V4a4 4 0 0 1 8 0V5.400h0.800A1.200 1.200 0 0 1 12 6.600v7.700a1.200 1.200 0 0 1-1.200 1.200H1.200A1.200 1.200 0 0 1 0 14.300V6.600A1.200 1.200 0 0 1 1.200 5.400z M3.600 5.400h4.800V4a2.400 2.400 0 0 0-4.800 0z M6 9.200a1.400 1.400 0 1 0 0 2.800a1.400 1.400 0 0 0 0-2.800z" fill="#a5a5a5" fill-rule="evenodd"/></svg></div>
<div class="tr lkd hov"><div class="fd"><span class="cb"></span><svg class="ck" width="21" height="20" viewBox="0 0 21 20"><path d="M0.200 12.400L2.700 9.100L7.600 13.300C11 8.500 15 3.800 20 0.200C15.500 6 11.600 12 8.300 19.200L7.400 19.200z" fill="#3ab750"/></svg><span class="dt">12/13/2018</span><span class="am">5.60</span><span class="ch b" style="left:224px">Stripe</span><span class="gt">&gt;&gt;</span><span class="ch r" style="left:413px">Fees</span><span class="ds">Monthly cus_129987601 tx_543635333 01/23/2020</span><span class="us">jacob</span><svg class="sh" width="14" height="18" viewBox="0 0 14 18"><path d="M1.500 0H9l5 5v11.500a1.500 1.500 0 0 1-1.500 1.500h-11A1.500 1.500 0 0 1 0 16.500V1.500A1.500 1.500 0 0 1 1.500 0z" fill="#04cb8f"/><path d="M9 0l5 5H10.200A1.200 1.200 0 0 1 9 3.800z" fill="#7fe3c3"/><path d="M3.900 8.900h6.200v6.100H3.900z M5 11.100v1.200h1.500v-1.200z M7.600 11.100v1.200h1.500v-1.200z M5 13v1.100h1.500V13z M7.600 13v1.100h1.500V13z" fill="#cff5e7" fill-rule="evenodd"/></svg><span class="cr">2020-03-25</span></div><svg class="lk" width="12" height="16" viewBox="0 0 12 16"><path d="M2 5.400V4a4 4 0 0 1 8 0V5.400h0.800A1.200 1.200 0 0 1 12 6.600v7.700a1.200 1.200 0 0 1-1.200 1.200H1.200A1.200 1.200 0 0 1 0 14.300V6.600A1.200 1.200 0 0 1 1.200 5.400z M3.600 5.400h4.800V4a2.400 2.400 0 0 0-4.800 0z M6 9.200a1.400 1.400 0 1 0 0 2.800a1.400 1.400 0 0 0 0-2.800z" fill="#a5a5a5" fill-rule="evenodd"/></svg></div>
<div class="tr lkd"><div class="fd"><span class="cb"></span><svg class="ck" width="21" height="20" viewBox="0 0 21 20"><path d="M0.200 12.400L2.700 9.100L7.600 13.300C11 8.500 15 3.800 20 0.200C15.500 6 11.600 12 8.300 19.200L7.400 19.200z" fill="#3ab750"/></svg><span class="dt">12/12/2018</span><span class="am">165.00</span><span class="ch y" style="left:224px">Michael Reimbursement</span><span class="gt">&gt;&gt;</span><span class="ch r" style="left:413px">Travel</span><span class="ds">01/23/2020</span><span class="us">jacob</span><svg class="sh" width="14" height="18" viewBox="0 0 14 18"><path d="M1.500 0H9l5 5v11.500a1.500 1.500 0 0 1-1.500 1.500h-11A1.500 1.500 0 0 1 0 16.500V1.500A1.500 1.500 0 0 1 1.500 0z" fill="#04cb8f"/><path d="M9 0l5 5H10.200A1.200 1.200 0 0 1 9 3.800z" fill="#7fe3c3"/><path d="M3.900 8.900h6.200v6.100H3.900z M5 11.100v1.200h1.500v-1.200z M7.600 11.100v1.200h1.500v-1.200z M5 13v1.100h1.500V13z M7.600 13v1.100h1.500V13z" fill="#cff5e7" fill-rule="evenodd"/></svg><span class="cr">2020-03-25</span></div><svg class="lk" width="12" height="16" viewBox="0 0 12 16"><path d="M2 5.400V4a4 4 0 0 1 8 0V5.400h0.800A1.200 1.200 0 0 1 12 6.600v7.700a1.200 1.200 0 0 1-1.200 1.200H1.200A1.200 1.200 0 0 1 0 14.300V6.600A1.200 1.200 0 0 1 1.200 5.400z M3.600 5.400h4.800V4a2.400 2.400 0 0 0-4.800 0z M6 9.200a1.400 1.400 0 1 0 0 2.800a1.400 1.400 0 0 0 0-2.800z" fill="#a5a5a5" fill-rule="evenodd"/></svg></div>
<div class="tr lkd"><div class="fd"><span class="cb"></span><svg class="ck" width="21" height="20" viewBox="0 0 21 20"><path d="M0.200 12.400L2.700 9.100L7.600 13.300C11 8.500 15 3.800 20 0.200C15.500 6 11.600 12 8.300 19.200L7.400 19.200z" fill="#3ab750"/></svg><span class="dt">12/12/2018</span><span class="am">120.00</span><span class="ch g" style="left:224px">Subscription</span><span class="gt">&gt;&gt;</span><span class="ch b" style="left:413px">Stripe</span><span class="ds">Monthly cus_129987590 tx_443635444 01/23/2020</span><span class="us">jacob</span><svg class="sh" width="14" height="18" viewBox="0 0 14 18"><path d="M1.500 0H9l5 5v11.500a1.500 1.500 0 0 1-1.500 1.500h-11A1.500 1.500 0 0 1 0 16.500V1.500A1.500 1.500 0 0 1 1.500 0z" fill="#04cb8f"/><path d="M9 0l5 5H10.200A1.200 1.200 0 0 1 9 3.800z" fill="#7fe3c3"/><path d="M3.900 8.900h6.200v6.100H3.900z M5 11.100v1.200h1.500v-1.200z M7.600 11.100v1.200h1.500v-1.200z M5 13v1.100h1.500V13z M7.600 13v1.100h1.500V13z" fill="#cff5e7" fill-rule="evenodd"/></svg><span class="cr">2020-03-25</span></div><svg class="lk" width="12" height="16" viewBox="0 0 12 16"><path d="M2 5.400V4a4 4 0 0 1 8 0V5.400h0.800A1.200 1.200 0 0 1 12 6.600v7.700a1.200 1.200 0 0 1-1.200 1.200H1.200A1.200 1.200 0 0 1 0 14.300V6.600A1.200 1.200 0 0 1 1.200 5.400z M3.600 5.400h4.800V4a2.400 2.400 0 0 0-4.800 0z M6 9.200a1.400 1.400 0 1 0 0 2.800a1.400 1.400 0 0 0 0-2.800z" fill="#a5a5a5" fill-rule="evenodd"/></svg></div>
<div class="tr lkd"><div class="fd"><span class="cb"></span><svg class="ck" width="21" height="20" viewBox="0 0 21 20"><path d="M0.200 12.400L2.700 9.100L7.600 13.300C11 8.500 15 3.800 20 0.200C15.500 6 11.600 12 8.300 19.200L7.400 19.200z" fill="#3ab750"/></svg><span class="dt">12/12/2018</span><span class="am">5.60</span><span class="ch b" style="left:224px">Stripe</span><span class="gt">&gt;&gt;</span><span class="ch r" style="left:413px">Fees</span><span class="ds">Monthly cus_129987590 tx_443635444 01/23/2020</span><span class="us">jacob</span><svg class="sh" width="14" height="18" viewBox="0 0 14 18"><path d="M1.500 0H9l5 5v11.500a1.500 1.500 0 0 1-1.500 1.500h-11A1.500 1.500 0 0 1 0 16.500V1.500A1.500 1.500 0 0 1 1.500 0z" fill="#04cb8f"/><path d="M9 0l5 5H10.200A1.200 1.200 0 0 1 9 3.800z" fill="#7fe3c3"/><path d="M3.900 8.900h6.200v6.100H3.900z M5 11.100v1.200h1.500v-1.200z M7.600 11.100v1.200h1.500v-1.200z M5 13v1.100h1.500V13z M7.600 13v1.100h1.500V13z" fill="#cff5e7" fill-rule="evenodd"/></svg><span class="cr">2020-03-25</span></div><svg class="lk" width="12" height="16" viewBox="0 0 12 16"><path d="M2 5.400V4a4 4 0 0 1 8 0V5.400h0.800A1.200 1.200 0 0 1 12 6.600v7.700a1.200 1.200 0 0 1-1.200 1.200H1.200A1.200 1.200 0 0 1 0 14.300V6.600A1.200 1.200 0 0 1 1.200 5.400z M3.600 5.400h4.800V4a2.400 2.400 0 0 0-4.800 0z M6 9.200a1.400 1.400 0 1 0 0 2.800a1.400 1.400 0 0 0 0-2.800z" fill="#a5a5a5" fill-rule="evenodd"/></svg></div>
<div class="tr lkd"><div class="fd"><span class="cb"></span><svg class="ck" width="21" height="20" viewBox="0 0 21 20"><path d="M0.200 12.400L2.700 9.100L7.600 13.300C11 8.500 15 3.800 20 0.200C15.500 6 11.600 12 8.300 19.200L7.400 19.200z" fill="#3ab750"/></svg><span class="dt">12/10/2018</span><span class="am">25.00</span><span class="ch y" style="left:224px">Michael Reimbursement</span><span class="gt">&gt;&gt;</span><span class="ch r" style="left:413px">Github</span><span class="ds">01/23/2020</span><span class="us">jacob</span><svg class="sh" width="14" height="18" viewBox="0 0 14 18"><path d="M1.500 0H9l5 5v11.500a1.500 1.500 0 0 1-1.500 1.500h-11A1.500 1.500 0 0 1 0 16.500V1.500A1.500 1.500 0 0 1 1.500 0z" fill="#04cb8f"/><path d="M9 0l5 5H10.200A1.200 1.200 0 0 1 9 3.800z" fill="#7fe3c3"/><path d="M3.900 8.900h6.200v6.100H3.900z M5 11.100v1.200h1.500v-1.200z M7.600 11.100v1.200h1.500v-1.200z M5 13v1.100h1.500V13z M7.600 13v1.100h1.500V13z" fill="#cff5e7" fill-rule="evenodd"/></svg><span class="cr">2020-03-25</span></div><svg class="lk" width="12" height="16" viewBox="0 0 12 16"><path d="M2 5.400V4a4 4 0 0 1 8 0V5.400h0.800A1.200 1.200 0 0 1 12 6.600v7.700a1.200 1.200 0 0 1-1.200 1.200H1.200A1.200 1.200 0 0 1 0 14.300V6.600A1.200 1.200 0 0 1 1.200 5.400z M3.600 5.400h4.800V4a2.400 2.400 0 0 0-4.800 0z M6 9.200a1.400 1.400 0 1 0 0 2.800a1.400 1.400 0 0 0 0-2.800z" fill="#a5a5a5" fill-rule="evenodd"/></svg></div>
<div class="tr lkd"><div class="fd"><span class="cb"></span><svg class="ck" width="21" height="20" viewBox="0 0 21 20"><path d="M0.200 12.400L2.700 9.100L7.600 13.300C11 8.500 15 3.800 20 0.200C15.500 6 11.600 12 8.300 19.200L7.400 19.200z" fill="#3ab750"/></svg><span class="dt">12/10/2018</span><span class="am">5.60</span><span class="ch b" style="left:224px">Stripe</span><span class="gt">&gt;&gt;</span><span class="ch r" style="left:413px">Fees</span><span class="ds">Monthly cus_129987545 tx_743635499 01/22/2020</span><span class="us">jacob</span><svg class="sh" width="14" height="18" viewBox="0 0 14 18"><path d="M1.500 0H9l5 5v11.500a1.500 1.500 0 0 1-1.500 1.500h-11A1.500 1.500 0 0 1 0 16.500V1.500A1.500 1.500 0 0 1 1.500 0z" fill="#04cb8f"/><path d="M9 0l5 5H10.200A1.200 1.200 0 0 1 9 3.800z" fill="#7fe3c3"/><path d="M3.900 8.900h6.200v6.100H3.900z M5 11.100v1.200h1.500v-1.200z M7.600 11.100v1.200h1.500v-1.200z M5 13v1.100h1.500V13z M7.600 13v1.100h1.500V13z" fill="#cff5e7" fill-rule="evenodd"/></svg><span class="cr">2020-03-25</span></div><svg class="lk" width="12" height="16" viewBox="0 0 12 16"><path d="M2 5.400V4a4 4 0 0 1 8 0V5.400h0.800A1.200 1.200 0 0 1 12 6.600v7.700a1.200 1.200 0 0 1-1.200 1.200H1.200A1.200 1.200 0 0 1 0 14.300V6.600A1.200 1.200 0 0 1 1.200 5.400z M3.600 5.400h4.800V4a2.400 2.400 0 0 0-4.800 0z M6 9.200a1.400 1.400 0 1 0 0 2.800a1.400 1.400 0 0 0 0-2.800z" fill="#a5a5a5" fill-rule="evenodd"/></svg></div>
<div class="tr lkd"><div class="fd"><span class="cb"></span><svg class="ck" width="21" height="20" viewBox="0 0 21 20"><path d="M0.200 12.400L2.700 9.100L7.600 13.300C11 8.500 15 3.800 20 0.200C15.500 6 11.600 12 8.300 19.200L7.400 19.200z" fill="#3ab750"/></svg><span class="dt">12/10/2018</span><span class="am">120.00</span><span class="ch g" style="left:224px">Subscription</span><span class="gt">&gt;&gt;</span><span class="ch b" style="left:413px">Stripe</span><span class="ds">Monthly cus_129987545 tx_743635499 01/22/2020</span><span class="us">jacob</span><svg class="sh" width="14" height="18" viewBox="0 0 14 18"><path d="M1.500 0H9l5 5v11.500a1.500 1.500 0 0 1-1.500 1.500h-11A1.500 1.500 0 0 1 0 16.500V1.500A1.500 1.500 0 0 1 1.500 0z" fill="#04cb8f"/><path d="M9 0l5 5H10.200A1.200 1.200 0 0 1 9 3.800z" fill="#7fe3c3"/><path d="M3.900 8.900h6.200v6.100H3.900z M5 11.100v1.200h1.500v-1.200z M7.600 11.100v1.200h1.500v-1.200z M5 13v1.100h1.500V13z M7.600 13v1.100h1.500V13z" fill="#cff5e7" fill-rule="evenodd"/></svg><span class="cr">2020-03-25</span></div><svg class="lk" width="12" height="16" viewBox="0 0 12 16"><path d="M2 5.400V4a4 4 0 0 1 8 0V5.400h0.800A1.200 1.200 0 0 1 12 6.600v7.700a1.200 1.200 0 0 1-1.200 1.200H1.200A1.200 1.200 0 0 1 0 14.300V6.600A1.200 1.200 0 0 1 1.200 5.400z M3.600 5.400h4.800V4a2.400 2.400 0 0 0-4.800 0z M6 9.200a1.400 1.400 0 1 0 0 2.800a1.400 1.400 0 0 0 0-2.800z" fill="#a5a5a5" fill-rule="evenodd"/></svg></div>
<div class="tr lkd"><div class="fd"><span class="cb"></span><svg class="ck" width="21" height="20" viewBox="0 0 21 20"><path d="M0.200 12.400L2.700 9.100L7.600 13.300C11 8.500 15 3.800 20 0.200C15.500 6 11.600 12 8.300 19.200L7.400 19.200z" fill="#3ab750"/></svg><span class="dt">12/09/2018</span><span class="am">120.00</span><span class="ch g" style="left:224px">Subscription</span><span class="gt">&gt;&gt;</span><span class="ch b" style="left:413px">Stripe</span><span class="ds">Monthly cus_129987495 tx_285775098 01/22/2020</span><span class="us">jacob</span><svg class="sh" width="14" height="18" viewBox="0 0 14 18"><path d="M1.500 0H9l5 5v11.500a1.500 1.500 0 0 1-1.500 1.500h-11A1.500 1.500 0 0 1 0 16.500V1.500A1.500 1.500 0 0 1 1.500 0z" fill="#04cb8f"/><path d="M9 0l5 5H10.200A1.200 1.200 0 0 1 9 3.800z" fill="#7fe3c3"/><path d="M3.900 8.900h6.200v6.100H3.900z M5 11.100v1.200h1.500v-1.200z M7.600 11.100v1.200h1.500v-1.200z M5 13v1.100h1.500V13z M7.600 13v1.100h1.500V13z" fill="#cff5e7" fill-rule="evenodd"/></svg><span class="cr">2020-03-25</span></div><svg class="lk" width="12" height="16" viewBox="0 0 12 16"><path d="M2 5.400V4a4 4 0 0 1 8 0V5.400h0.800A1.200 1.200 0 0 1 12 6.600v7.700a1.200 1.200 0 0 1-1.200 1.200H1.200A1.200 1.200 0 0 1 0 14.300V6.600A1.200 1.200 0 0 1 1.200 5.400z M3.600 5.400h4.800V4a2.400 2.400 0 0 0-4.800 0z M6 9.200a1.400 1.400 0 1 0 0 2.800a1.400 1.400 0 0 0 0-2.800z" fill="#a5a5a5" fill-rule="evenodd"/></svg></div>
</div>

<div id="foot"><i style="left:0;width:141px"></i><i style="left:140px;width:96px"></i><i style="left:235px;width:62px"></i></div>
<div id="footg"></div>

<!-- ================= DIALOG ================= -->
<div id="dlg" class="gs">
  <h3>Book Settings</h3>
  <label style="top:61px">Time zone:</label>
  <select style="top:81px;width:342px"><option>(GMT-03:00) Sao Paulo</option></select>
  <label style="top:134px">Date pattern:</label>
  <select style="top:154px;width:109px"><option>MM/dd/yyyy</option></select>
  <label style="top:207px">Decimal places:</label>
  <select style="top:227px;width:51px"><option>2</option></select>
  <label style="top:280px">Number format:</label>
  <select style="top:300px;width:105px"><option>###,##0.00</option></select>
  <label style="top:353px">Page size</label>
  <select style="top:373px;width:65px"><option>50</option></select>
  <label style="top:426px">Lock date:</label>
  <div id="lockin">12/31/2018</div>
  <div id="auto"><svg class="abs" style="left:1px;top:1px" width="11" height="11" viewBox="0 0 11 11"><path d="M1.800 5.600L4.300 8.200L9.300 2.400" fill="none" stroke="#fff" stroke-width="1.900"/></svg></div>
  <label style="left:40px;top:502px">Autopost</label>
  <div class="dbtn" style="left:20px;width:44px">Save</div>
  <div class="dbtn" style="left:79px;width:54px">Cancel</div>
</div>

<div class="red" style="left:663px;top:572px;width:198px;height:75px"></div>
<div class="red" style="left:1841px;top:525px;width:46px;height:396px"></div>
</body>
</html>
